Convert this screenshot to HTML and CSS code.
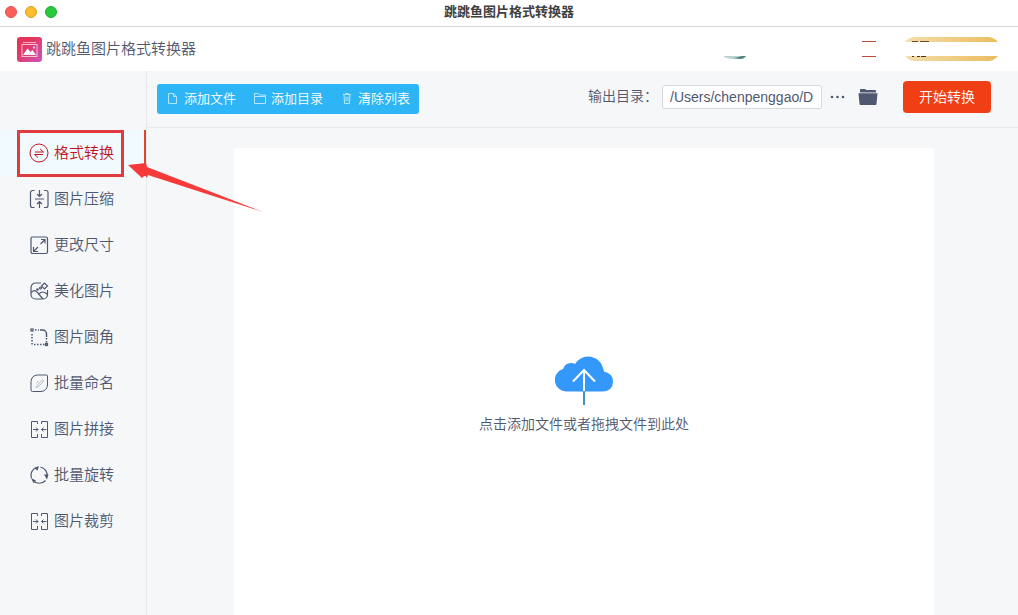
FILE: index.html
```html
<!DOCTYPE html>
<html lang="zh-CN">
<head>
    <meta charset="UTF-8">
    <meta name="viewport" content="width=device-width, initial-scale=1.0">
    <title>跳跳鱼图片格式转换器</title>
    <link rel="stylesheet" href="styles.css">
</head>
<body>
    <div class="window">
        <div class="titlebar">
            <div class="lights">
                <button class="light light-close" aria-label="关闭"></button>
                <button class="light light-min" aria-label="最小化"></button>
                <button class="light light-max" aria-label="最大化"></button>
            </div>
            <div class="window-title">跳跳鱼图片格式转换器</div>
        </div>

        <header class="header">
            <svg class="logo" viewBox="0 0 25 25" aria-hidden="true">
                <defs>
                    <linearGradient id="logo-bg" x1="0" y1="0" x2="1" y2="1">
                        <stop offset="0.3" stop-color="#e8335c"/>
                        <stop offset="1" stop-color="#cb55bd"/>
                    </linearGradient>
                </defs>
                <rect width="25" height="25" rx="3" fill="url(#logo-bg)"/>
                <path d="M6 5.500h13" stroke="#f7b6c9" fill="none"/>
                <rect x="5" y="7.500" width="15" height="12" fill="none" stroke="#f9c3d2"/>
                <path d="M6 18l4.500-6.500 3 3.500 2-2 3.500 5z" fill="#fff"/>
                <circle cx="17" cy="10.500" r="1" fill="#fff"/>
            </svg>
            <h1 class="app-name">跳跳鱼图片格式转换器</h1>
            <div class="account">
                <svg class="avatar" viewBox="0 0 24 24" aria-hidden="true">
                    <path d="M1 19h22q-2 3-6 3H9Q4 21.500 1 20z" fill="#b9d3d1"/>
                    <path d="M10 21q6-.5 8-2h5q-2 3-6 3z" fill="#4f8583"/>
                </svg>
                <svg class="menu" viewBox="0 0 14 24" aria-hidden="true">
                    <path d="M0 4.500h14M0 19.500h14" stroke="#c0493a"/>
                </svg>
                <div class="vip">
                    <svg class="vip-marks" viewBox="0 0 97 24" aria-hidden="true">
                        <path d="M9 4.500h6M17 4.500h9" stroke="#6b4a26"/>
                        <path d="M9 19.500h2M14 19.500h3M18 19.500h5" stroke="#4a3520"/>
                    </svg>
                </div>
            </div>
        </header>

        <div class="layout">
            <nav class="sidebar">
                <a href="#convert" class="nav-link active">
                    <svg class="icon icon-thin" viewBox="0 0 20 20"><circle cx="10" cy="10" r="9"/><path d="M6 9h8.500L11 6M14 11.500H5.500L9 14.500"/></svg>
                    <span class="nav-text">格式转换</span>
                </a>
                <a href="#compress" class="nav-link">
                    <svg class="icon" viewBox="0 0 20 20"><path d="M5.500 1.500H3.500a2 2 0 0 0-2 2v13a2 2 0 0 0 2 2h2M15 1.500h2a2 2 0 0 1 2 2v13a2 2 0 0 1-2 2h-2M6 10h9M10.500 1v6.500M8 5l2.500 2.500L13 5M10.500 19v-6.500M8 15l2.500-2.500L13 15"/></svg>
                    <span class="nav-text">图片压缩</span>
                </a>
                <a href="#resize" class="nav-link">
                    <svg class="icon" viewBox="0 0 20 20"><rect x="2" y="2" width="16.500" height="16.500" rx="1.500"/><path d="M11.500 9L16 4.500M12 4.500h4v4M9 12l-4.500 4.500M4.500 12v4.500H9"/></svg>
                    <span class="nav-text">更改尺寸</span>
                </a>
                <a href="#beautify" class="nav-link">
                    <svg class="icon" viewBox="0 0 20 20"><path d="M12 2H6.500A4.500 4.500 0 0 0 2 6.500v7a4.500 4.500 0 0 0 4.500 4.500h7.500a4.500 4.500 0 0 0 4.500-4.500V9M2 12c2-3 4.500-3 6.500-.5l5.500 6.500M10 13c2.500-3 5.500-2.500 8.500.5M12.500 5l3-3 3 3-3 3z"/><circle cx="11.500" cy="7" r="1"/><circle cx="8.500" cy="8.500" r=".7"/></svg>
                    <span class="nav-text">美化图片</span>
                </a>
                <a href="#round" class="nav-link">
                    <svg class="icon" viewBox="0 0 20 20"><rect x="2" y="2" width="2" height="2"/><rect x="16.500" y="16.500" width="2" height="2"/><path d="M11 3h2.500a4 4 0 0 1 4 4v3" stroke-width="1.500"/><path d="M6 3h4M3 7v11M5 17.500h11M17.500 11v5" stroke-width="1.500" stroke-dasharray="1.500 1.500"/></svg>
                    <span class="nav-text">图片圆角</span>
                </a>
                <a href="#rename" class="nav-link">
                    <svg class="icon icon-thin" viewBox="0 0 20 20"><path d="M8.500 2h9a1 1 0 0 1 1 1v9a6.500 6.500 0 0 1-6.500 6.500H3.500A1.500 1.500 0 0 1 2 17V8.500A6.500 6.500 0 0 1 8.500 2z"/><path class="faint" d="M7 14l5.500-6.500c2-1 2.500 0 1.500 1.500L9.500 13.500c-1 1-2.500 1.500-2.500.500zM7.500 10l2-2"/></svg>
                    <span class="nav-text">批量命名</span>
                </a>
                <a href="#join" class="nav-link">
                    <svg class="icon icon-thin" viewBox="0 0 20 20"><path d="M2.500 7V2.500h6V5M2.500 7v11.500h6V15M12.500 5V2.500h6v16h-6V15M4 10.500h5M7 8.500l2 2-2 2M17.500 10.500h-5M14.500 8.500l-2 2 2 2"/></svg>
                    <span class="nav-text">图片拼接</span>
                </a>
                <a href="#rotate" class="nav-link">
                    <svg class="icon" viewBox="0 0 20 20"><path d="M2.500 13a8 8 0 0 1 5-10.500M11.500 2A8.500 8.500 0 0 1 18 12M16.500 15.500a8.500 8.500 0 0 1-12.500 0"/><path class="solid" d="M5 3l5-2L8.500 5.500zM15 9.500h4.500L18 14.500zM2 13l5 2.500L4.500 18z"/></svg>
                    <span class="nav-text">批量旋转</span>
                </a>
                <a href="#crop" class="nav-link">
                    <svg class="icon icon-thin" viewBox="0 0 20 20"><path d="M2.500 7V2.500h6V5M2.500 7v11.500h6V15M12.500 5V2.500h6v16h-6V15M4 10.500h5M7 8.500l2 2-2 2M17.500 10.500h-5M14.500 8.500l-2 2 2 2"/></svg>
                    <span class="nav-text">图片裁剪</span>
                </a>
            </nav>

            <main class="main-content">
                <div class="toolbar">
                    <div class="actions">
                        <button class="action">
                            <svg class="action-icon" viewBox="0 0 14 14"><path d="M2.500 2.500h5l3 3v7h-8zM7.500 2.500v3h3"/></svg>
                            添加文件
                        </button>
                        <button class="action">
                            <svg class="action-icon" viewBox="0 0 14 14"><path d="M1.500 12.500v-10h4l1 1.500h6v8.500zM1.500 5.500h11"/></svg>
                            添加目录
                        </button>
                        <button class="action">
                            <svg class="action-icon" viewBox="0 0 14 14"><path d="M3 3.500h8M5.500 3.500v-1h3v1M4 3.500l.5 9h5l.5-9M6 5.500v5M8 5.500v5"/></svg>
                            清除列表
                        </button>
                    </div>
                    <div class="output">
                        <label for="output-dir" class="output-label">输出目录：</label>
                        <input type="text" id="output-dir" class="output-dir" value="/Users/chenpenggao/Desktop">
                        <button class="icon-button" aria-label="选择目录">
                            <svg class="dots" viewBox="0 0 16 4"><circle cx="2" cy="2" r="1.300"/><circle cx="7.500" cy="2" r="1.300"/><circle cx="13" cy="2" r="1.300"/></svg>
                        </button>
                        <button class="icon-button" aria-label="打开目录">
                            <svg class="folder" viewBox="0 0 20 18"><path d="M2 4.500V1.500Q2 1 2.500 1H7l1.500 1H17q1 0 1 1v1.500z"/><path d="M.5 5.300h19l-1 10.700q0 1-1 1h-15q-1 0-1-1z"/></svg>
                        </button>
                        <button class="start-button">开始转换</button>
                    </div>
                </div>

                <div class="workspace">
                    <button class="drop-zone">
                        <svg class="cloud" viewBox="0 0 58 50" aria-hidden="true">
                            <path d="M12 35.500A11.500 11.500 0 0 1 8 13Q10 7 16 7q2.500 0 4 1Q25 .5 33 .5 46 1 49 15.500q9 2 9 10 0 9-10 10z" fill="#3498fb"/>
                            <path d="M29 35v14" stroke="#3f92cd" stroke-width="2"/>
                            <path d="M29 35V14M18 25.500L29 14l11 11.500" fill="none" stroke="#fff" stroke-width="2"/>
                        </svg>
                        点击添加文件或者拖拽文件到此处
                    </button>
                </div>
            </main>
        </div>

        <!-- callout on the active item -->
        <div class="callout-box"></div>
        <svg class="callout-arrow" viewBox="0 0 136 52" aria-hidden="true">
            <path d="M0 5l18-2 1 4L135 52 23 16l-3-1-1 3-2-3-3 3z"/>
        </svg>
    </div>
</body>
</html>
```

FILE: styles.css
```css
:root {
    --text: #4f5870;
    --danger: #f03f14;
    --blue: #2eb5f5;
    --bg: #f5f7f9;
    --line: #e8eaed;
}

* {
    margin: 0;
    padding: 0;
    box-sizing: border-box;
    font-family: "Liberation Sans", "Noto Sans CJK SC", sans-serif;
}

body {
    background: white;
    color: var(--text);
    font-weight: 350;
}

button {
    border: none;
    background: none;
    color: inherit;
    font-weight: 350;
    cursor: pointer;
}

.window {
    position: relative;
    display: flex;
    flex-direction: column;
    height: 100vh;
    overflow: hidden;
}

.titlebar {
    display: grid;
    grid-template-columns: 1fr auto 1fr;
    align-items: center;
    height: 27px;
    padding: 0 5px;
    border-bottom: 1px solid #d5d5d5;
}

.lights {
    display: flex;
    gap: 8px;
    padding-bottom: 2px;
}

.light {
    width: 12px;
    height: 12px;
    border: 1px solid;
    border-radius: 50%;
}

.light-close {
    background: #f95f5b;
    border-color: #e2524e;
}

.light-min {
    background: #fbbd2e;
    border-color: #dfa023;
}

.light-max {
    background: #28c83f;
    border-color: #1dad2b;
}

.window-title {
    padding-bottom: 5px;
    color: #404040;
    font-size: 13px;
    font-weight: 700;
}

.header {
    display: flex;
    align-items: center;
    gap: 4px;
    height: 44px;
    padding: 1px 18px 0 17px;
}

.logo {
    width: 25px;
    height: 25px;
}

.app-name {
    padding-bottom: 4px;
    font-size: 15px;
    font-weight: 350;
}

.account {
    display: flex;
    align-items: center;
    margin-left: auto;
    padding-bottom: 1px;
}

.avatar {
    width: 24px;
    height: 24px;
}

.menu {
    width: 14px;
    height: 24px;
    margin: 0 27px 0 115px;
}

.vip {
    width: 97px;
    height: 24px;
    border-radius: 12px;
    background: linear-gradient(white, white) 0 5px / 100% 14px no-repeat,
        linear-gradient(90deg, #f3dfae, #ebbc5c);
}

.vip-marks {
    display: block;
}

.layout {
    display: flex;
    flex: 1;
    min-height: 0;
    background: var(--bg);
}

.sidebar {
    width: 147px;
    padding-top: 59px;
    border-right: 1px solid var(--line);
}

.nav-link {
    display: flex;
    align-items: center;
    gap: 5px;
    height: 46px;
    padding-left: 29px;
    color: var(--text);
    font-size: 15px;
    text-decoration: none;
}

.nav-link.active {
    border-right: 2px solid #e0452c;
    background: #f0faff;
    color: #c0141c;
}

.nav-text {
    padding-bottom: 3px;
}

.icon {
    width: 20px;
    height: 20px;
    fill: none;
    stroke: currentColor;
    stroke-width: 1.2;
}

.icon-thin {
    stroke-width: 1;
}

.icon .faint {
    stroke: #b4bac6;
}

.icon .solid {
    fill: currentColor;
    stroke: none;
}

.main-content {
    display: flex;
    flex: 1;
    flex-direction: column;
    min-width: 0;
}

.toolbar {
    display: flex;
    align-items: center;
    justify-content: space-between;
    height: 57px;
    padding: 0 27px 4px 10px;
    border-bottom: 1px solid var(--line);
}

.actions {
    display: flex;
    align-items: center;
    height: 30px;
    margin-top: 4px;
    padding: 0 0 3px 9px;
    border-radius: 3px;
    background: var(--blue);
    color: white;
}

.action {
    display: flex;
    align-items: center;
    gap: 4px;
    width: 87px;
    font-size: 13px;
    white-space: nowrap;
}

.action:last-child {
    width: 79px;
}

.action-icon {
    width: 14px;
    height: 14px;
    fill: none;
    stroke: #b5e4fc;
}

.output {
    display: flex;
    align-items: center;
}

.output-label {
    padding-bottom: 4px;
    font-size: 14px;
}

.output-dir {
    width: 160px;
    height: 24px;
    margin: 0 8px 0 4px;
    padding: 0 8px 0 7px;
    border: 1px solid #d6d9de;
    border-radius: 3px;
    background: white;
    color: var(--text);
    font-size: 14px;
}

.icon-button {
    display: flex;
    align-items: center;
    margin-right: 12px;
    fill: #4f5870;
}

.dots {
    width: 16px;
    height: 4px;
}

.folder {
    width: 20px;
    height: 18px;
}

.start-button {
    width: 88px;
    height: 32px;
    margin-left: 13px;
    padding-bottom: 2px;
    border-radius: 4px;
    background: var(--danger);
    color: white;
    font-size: 14px;
}

.workspace {
    display: flex;
    flex: 1;
    padding: 20px 84px 0 87px;
}

.drop-zone {
    display: flex;
    flex: 1;
    flex-direction: column;
    align-items: center;
    justify-content: center;
    gap: 7px;
    padding-top: 26px;
    background: white;
    font-size: 14px;
}

.cloud {
    width: 58px;
    height: 50px;
}

.callout-box {
    position: absolute;
    top: 130px;
    left: 17px;
    width: 107px;
    height: 47px;
    border: 3px solid #e03b3f;
    pointer-events: none;
}

.callout-arrow {
    position: absolute;
    top: 160px;
    left: 128px;
    width: 136px;
    height: 52px;
    fill: #f8393a;
    pointer-events: none;
}
```
